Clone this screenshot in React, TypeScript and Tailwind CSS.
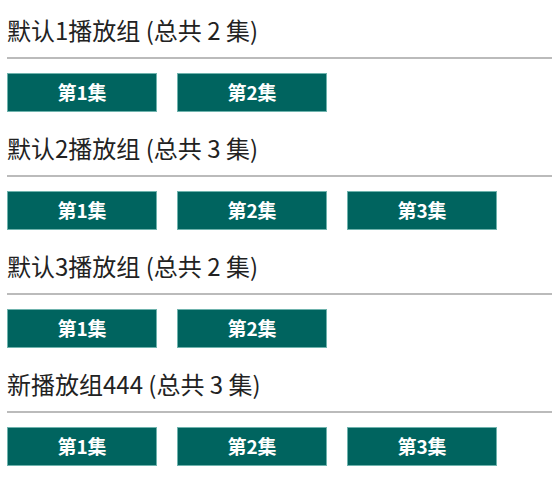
import React from "react";

const groups = [
  { name: "默认1播放组", count: 2 },
  { name: "默认2播放组", count: 3 },
  { name: "默认3播放组", count: 2 },
  { name: "新播放组444", count: 3 },
];

export default function App() {
  return (
    <div
      className="pl-[7px] bg-white min-h-[485px]"
      style={{ fontFamily: '"Noto Sans CJK SC", "Noto Sans", sans-serif' }}
    >
      {groups.map((g, i) => (
        <div key={i} className={i === 0 ? "pt-[15px]" : "pt-[21px]"}>
          <div className="text-[24px] leading-[30px] text-[#222]">
            {g.name} (总共 {g.count} 集)
          </div>
          <div className="mt-[12px] h-[2px] bg-[#bbbbbb]" />
          <div className="mt-[14px] flex gap-[20px]">
            {Array.from({ length: g.count }).map((_, j) => (
              <div
                key={j}
                className="w-[150px] h-[39px] bg-[#00645f] border border-[#6fb3ad] flex items-center justify-center text-white font-bold text-[19px]"
              >
                第{j + 1}集
              </div>
            ))}
          </div>
        </div>
      ))}
    </div>
  );
}
